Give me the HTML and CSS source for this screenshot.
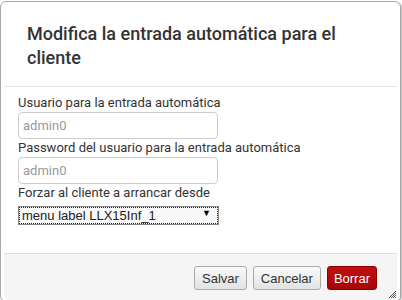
FILE: index.html
```html
<!DOCTYPE html>
<html lang="es">
<head>
    <meta charset="UTF-8">
    <title>Entrada automática</title>
    <link rel="stylesheet" href="styles.css">
</head>
<body>
    <div class="dialog">
        <div class="dialog-header">
            <h1>Modifica la entrada automática para el cliente</h1>
        </div>

        <div class="dialog-body">
            <label for="autoUser">Usuario para la entrada automática</label>
            <input type="text" id="autoUser" placeholder="admin0">

            <label for="autoPass">Password del usuario para la entrada automática</label>
            <input type="text" id="autoPass" placeholder="admin0">

            <label for="bootFrom">Forzar al cliente a arrancar desde</label>
            <span class="select-wrap">
                <select id="bootFrom">
                    <option selected>menu label LLX15Inf_1</option>
                </select>
            </span>
        </div>

        <div class="dialog-footer">
            <button class="btn">Salvar</button>
            <button class="btn">Cancelar</button>
            <button class="btn btn-danger">Borrar</button>
        </div>

        <svg class="resize" width="9" height="9" viewBox="0 0 9 9">
            <path d="M8 1L1 8M8 3L3 8M8 5L5 8M8 7L7 8" stroke="#555" stroke-width="1"/>
        </svg>
    </div>
</body>
</html>
```

FILE: styles.css
```css
body {
    margin: 0;
    padding-top: 1px;
    background: #fff;
    font-family: Roboto, "Liberation Sans", Arial, sans-serif;
    color: #333;
}
.dialog {
    position: relative;
    width: 393px;
    padding: 0 3px 1px;
    background: #fff;
    border: 1px solid #a8a8a8;
    border-radius: 6px;
    box-shadow: 1px 1px 1px rgba(0, 0, 0, 0.25);
}
.dialog-header {
    padding: 20px 23px 16px;
    border-bottom: 1px solid #e5e5e5;
}
.dialog-header h1 {
    margin: 0;
    font-size: 18px;
    font-weight: 500;
    line-height: 24px;
}
.dialog-body {
    padding: 8px 14px 28px;
}
.dialog-body label {
    display: block;
    font-size: 13px;
    line-height: 15px;
}
.dialog-body input {
    display: block;
    box-sizing: border-box;
    width: 200px;
    height: 27px;
    margin: 2px 0 1px;
    padding: 0 4px;
    border: 1px solid #ccc;
    border-radius: 4px;
    font-family: Roboto, sans-serif;
    font-size: 13px;
    color: #333;
}
.dialog-body input::placeholder {
    color: #999;
}
.select-wrap {
    position: relative;
    display: block;
    width: 201px;
    margin-top: 5px;
}
.select-wrap select {
    appearance: none;
    box-sizing: border-box;
    width: 201px;
    height: 19px;
    padding: 0 3px;
    border: 1px solid #888;
    outline: 1px dotted #222;
    outline-offset: -2px;
    background: #f8f8f8;
    font-family: "Liberation Sans", Arial, sans-serif;
    font-size: 13px;
    color: #222;
}
.select-wrap::after {
    content: "▼";
    position: absolute;
    right: 8px;
    top: 3px;
    font-size: 9px;
    color: #000;
    pointer-events: none;
}
.dialog-footer {
    display: flex;
    justify-content: flex-end;
    gap: 6px;
    padding: 12px 20px 10px;
    background: #f5f5f5;
    border-top: 1px solid #e0e0e0;
    border-radius: 0 0 6px 6px;
}
.btn {
    height: 24px;
    padding: 0 7px;
    border: 1px solid #aaa;
    border-radius: 3px;
    background: linear-gradient(#fafafa, #e2e2e2);
    font-family: "Liberation Sans", Arial, sans-serif;
    font-size: 13px;
    color: #333;
}
.btn-danger {
    padding: 0 6px;
    border-color: #8e0000;
    background: linear-gradient(#c21010, #a60606);
    color: #fff;
}
.resize {
    position: absolute;
    right: 3px;
    bottom: 2px;
}
```
